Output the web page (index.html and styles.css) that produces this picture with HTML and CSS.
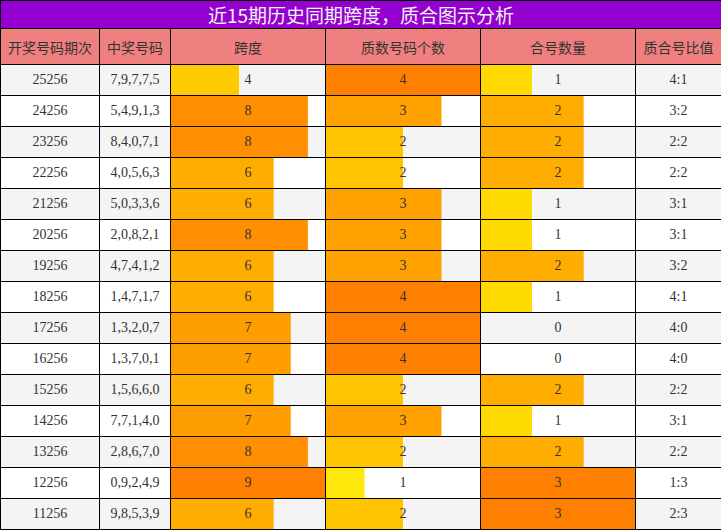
FILE: index.html
```html
<!DOCTYPE html>
<html lang="zh">
<head>
<meta charset="utf-8">
<title>跨度质合图示分析</title>
<link rel="stylesheet" href="styles.css">
</head>
<body>
<table class="grid">
  <colgroup>
    <col class="c1"><col class="c2"><col class="c3"><col class="c4"><col class="c5"><col class="c6">
  </colgroup>
  <thead>
    <tr class="title-row"><th colspan="6" class="title">近15期历史同期跨度，质合图示分析</th></tr>
    <tr class="head-row">
      <th>开奖号码期次</th><th>中奖号码</th><th>跨度</th><th>质数号码个数</th><th>合号数量</th><th>质合号比值</th>
    </tr>
  </thead>
  <tbody>
    <tr><td>25256</td><td>7,9,7,7,5</td><td class="bar" style="--w:44.44%;--c:hsl(47.8,100%,50%)">4</td><td class="bar" style="--w:100%;--c:hsl(30,100%,50%)">4</td><td class="bar" style="--w:33.33%;--c:hsl(51.3,100%,50%)">1</td><td>4:1</td></tr>
    <tr><td>24256</td><td>5,4,9,1,3</td><td class="bar" style="--w:88.89%;--c:hsl(33.6,100%,50%)">8</td><td class="bar" style="--w:75%;--c:hsl(38,100%,50%)">3</td><td class="bar" style="--w:66.67%;--c:hsl(40.7,100%,50%)">2</td><td>3:2</td></tr>
    <tr><td>23256</td><td>8,4,0,7,1</td><td class="bar" style="--w:88.89%;--c:hsl(33.6,100%,50%)">8</td><td class="bar" style="--w:50%;--c:hsl(46,100%,50%)">2</td><td class="bar" style="--w:66.67%;--c:hsl(40.7,100%,50%)">2</td><td>2:2</td></tr>
    <tr><td>22256</td><td>4,0,5,6,3</td><td class="bar" style="--w:66.67%;--c:hsl(40.7,100%,50%)">6</td><td class="bar" style="--w:50%;--c:hsl(46,100%,50%)">2</td><td class="bar" style="--w:66.67%;--c:hsl(40.7,100%,50%)">2</td><td>2:2</td></tr>
    <tr><td>21256</td><td>5,0,3,3,6</td><td class="bar" style="--w:66.67%;--c:hsl(40.7,100%,50%)">6</td><td class="bar" style="--w:75%;--c:hsl(38,100%,50%)">3</td><td class="bar" style="--w:33.33%;--c:hsl(51.3,100%,50%)">1</td><td>3:1</td></tr>
    <tr><td>20256</td><td>2,0,8,2,1</td><td class="bar" style="--w:88.89%;--c:hsl(33.6,100%,50%)">8</td><td class="bar" style="--w:75%;--c:hsl(38,100%,50%)">3</td><td class="bar" style="--w:33.33%;--c:hsl(51.3,100%,50%)">1</td><td>3:1</td></tr>
    <tr><td>19256</td><td>4,7,4,1,2</td><td class="bar" style="--w:66.67%;--c:hsl(40.7,100%,50%)">6</td><td class="bar" style="--w:75%;--c:hsl(38,100%,50%)">3</td><td class="bar" style="--w:66.67%;--c:hsl(40.7,100%,50%)">2</td><td>3:2</td></tr>
    <tr><td>18256</td><td>1,4,7,1,7</td><td class="bar" style="--w:66.67%;--c:hsl(40.7,100%,50%)">6</td><td class="bar" style="--w:100%;--c:hsl(30,100%,50%)">4</td><td class="bar" style="--w:33.33%;--c:hsl(51.3,100%,50%)">1</td><td>4:1</td></tr>
    <tr><td>17256</td><td>1,3,2,0,7</td><td class="bar" style="--w:77.78%;--c:hsl(37.1,100%,50%)">7</td><td class="bar" style="--w:100%;--c:hsl(30,100%,50%)">4</td><td class="bar" style="--w:0%;--c:hsl(62,100%,50%)">0</td><td>4:0</td></tr>
    <tr><td>16256</td><td>1,3,7,0,1</td><td class="bar" style="--w:77.78%;--c:hsl(37.1,100%,50%)">7</td><td class="bar" style="--w:100%;--c:hsl(30,100%,50%)">4</td><td class="bar" style="--w:0%;--c:hsl(62,100%,50%)">0</td><td>4:0</td></tr>
    <tr><td>15256</td><td>1,5,6,6,0</td><td class="bar" style="--w:66.67%;--c:hsl(40.7,100%,50%)">6</td><td class="bar" style="--w:50%;--c:hsl(46,100%,50%)">2</td><td class="bar" style="--w:66.67%;--c:hsl(40.7,100%,50%)">2</td><td>2:2</td></tr>
    <tr><td>14256</td><td>7,7,1,4,0</td><td class="bar" style="--w:77.78%;--c:hsl(37.1,100%,50%)">7</td><td class="bar" style="--w:75%;--c:hsl(38,100%,50%)">3</td><td class="bar" style="--w:33.33%;--c:hsl(51.3,100%,50%)">1</td><td>3:1</td></tr>
    <tr><td>13256</td><td>2,8,6,7,0</td><td class="bar" style="--w:88.89%;--c:hsl(33.6,100%,50%)">8</td><td class="bar" style="--w:50%;--c:hsl(46,100%,50%)">2</td><td class="bar" style="--w:66.67%;--c:hsl(40.7,100%,50%)">2</td><td>2:2</td></tr>
    <tr><td>12256</td><td>0,9,2,4,9</td><td class="bar" style="--w:100%;--c:hsl(30,100%,50%)">9</td><td class="bar" style="--w:25%;--c:hsl(54,100%,52%)">1</td><td class="bar" style="--w:100%;--c:hsl(30,100%,50%)">3</td><td>1:3</td></tr>
    <tr><td>11256</td><td>9,8,5,3,9</td><td class="bar" style="--w:66.67%;--c:hsl(40.7,100%,50%)">6</td><td class="bar" style="--w:50%;--c:hsl(46,100%,50%)">2</td><td class="bar" style="--w:100%;--c:hsl(30,100%,50%)">3</td><td>2:3</td></tr>
  </tbody>
</table>
</body>
</html>
```

FILE: styles.css
```css
html, body {
  margin: 0;
  padding: 0;
  background: #ffffff;
}

.grid {
  width: 721px;
  border-collapse: collapse;
  table-layout: fixed;
  font-family: "Liberation Serif", "Noto Sans CJK SC", serif;
  font-size: 14px;
  color: #333333;
}

.c1 { width: 99px; }
.c2 { width: 71px; }
.c3 { width: 155px; }
.c4 { width: 155px; }
.c5 { width: 155px; }
.c6 { width: 86px; }

.grid th,
.grid td {
  border: 1px solid #000000;
  padding: 0;
  text-align: center;
  vertical-align: middle;
}

.title {
  height: 27px;
  background: #9400d0;
  color: #f4f4f4;
  font-family: "Noto Sans CJK SC", "Noto Sans", sans-serif;
  font-size: 19px;
  font-weight: normal;
  line-height: 26px;
}

.head-row th {
  height: 35px;
  background: #f08080;
  font-family: "Noto Sans CJK SC", "Noto Sans", sans-serif;
  font-size: 14px;
  font-weight: normal;
  color: #333333;
}

.grid tbody td {
  height: 30px;
  line-height: 16px;
}

.grid tbody tr:nth-child(odd) {
  background: #f4f4f4;
}

.grid tbody tr:nth-child(even) {
  background: #ffffff;
}

.bar {
  background-image: linear-gradient(var(--c), var(--c));
  background-size: var(--w) 100%;
  background-repeat: no-repeat;
  background-position: left top;
}
```
